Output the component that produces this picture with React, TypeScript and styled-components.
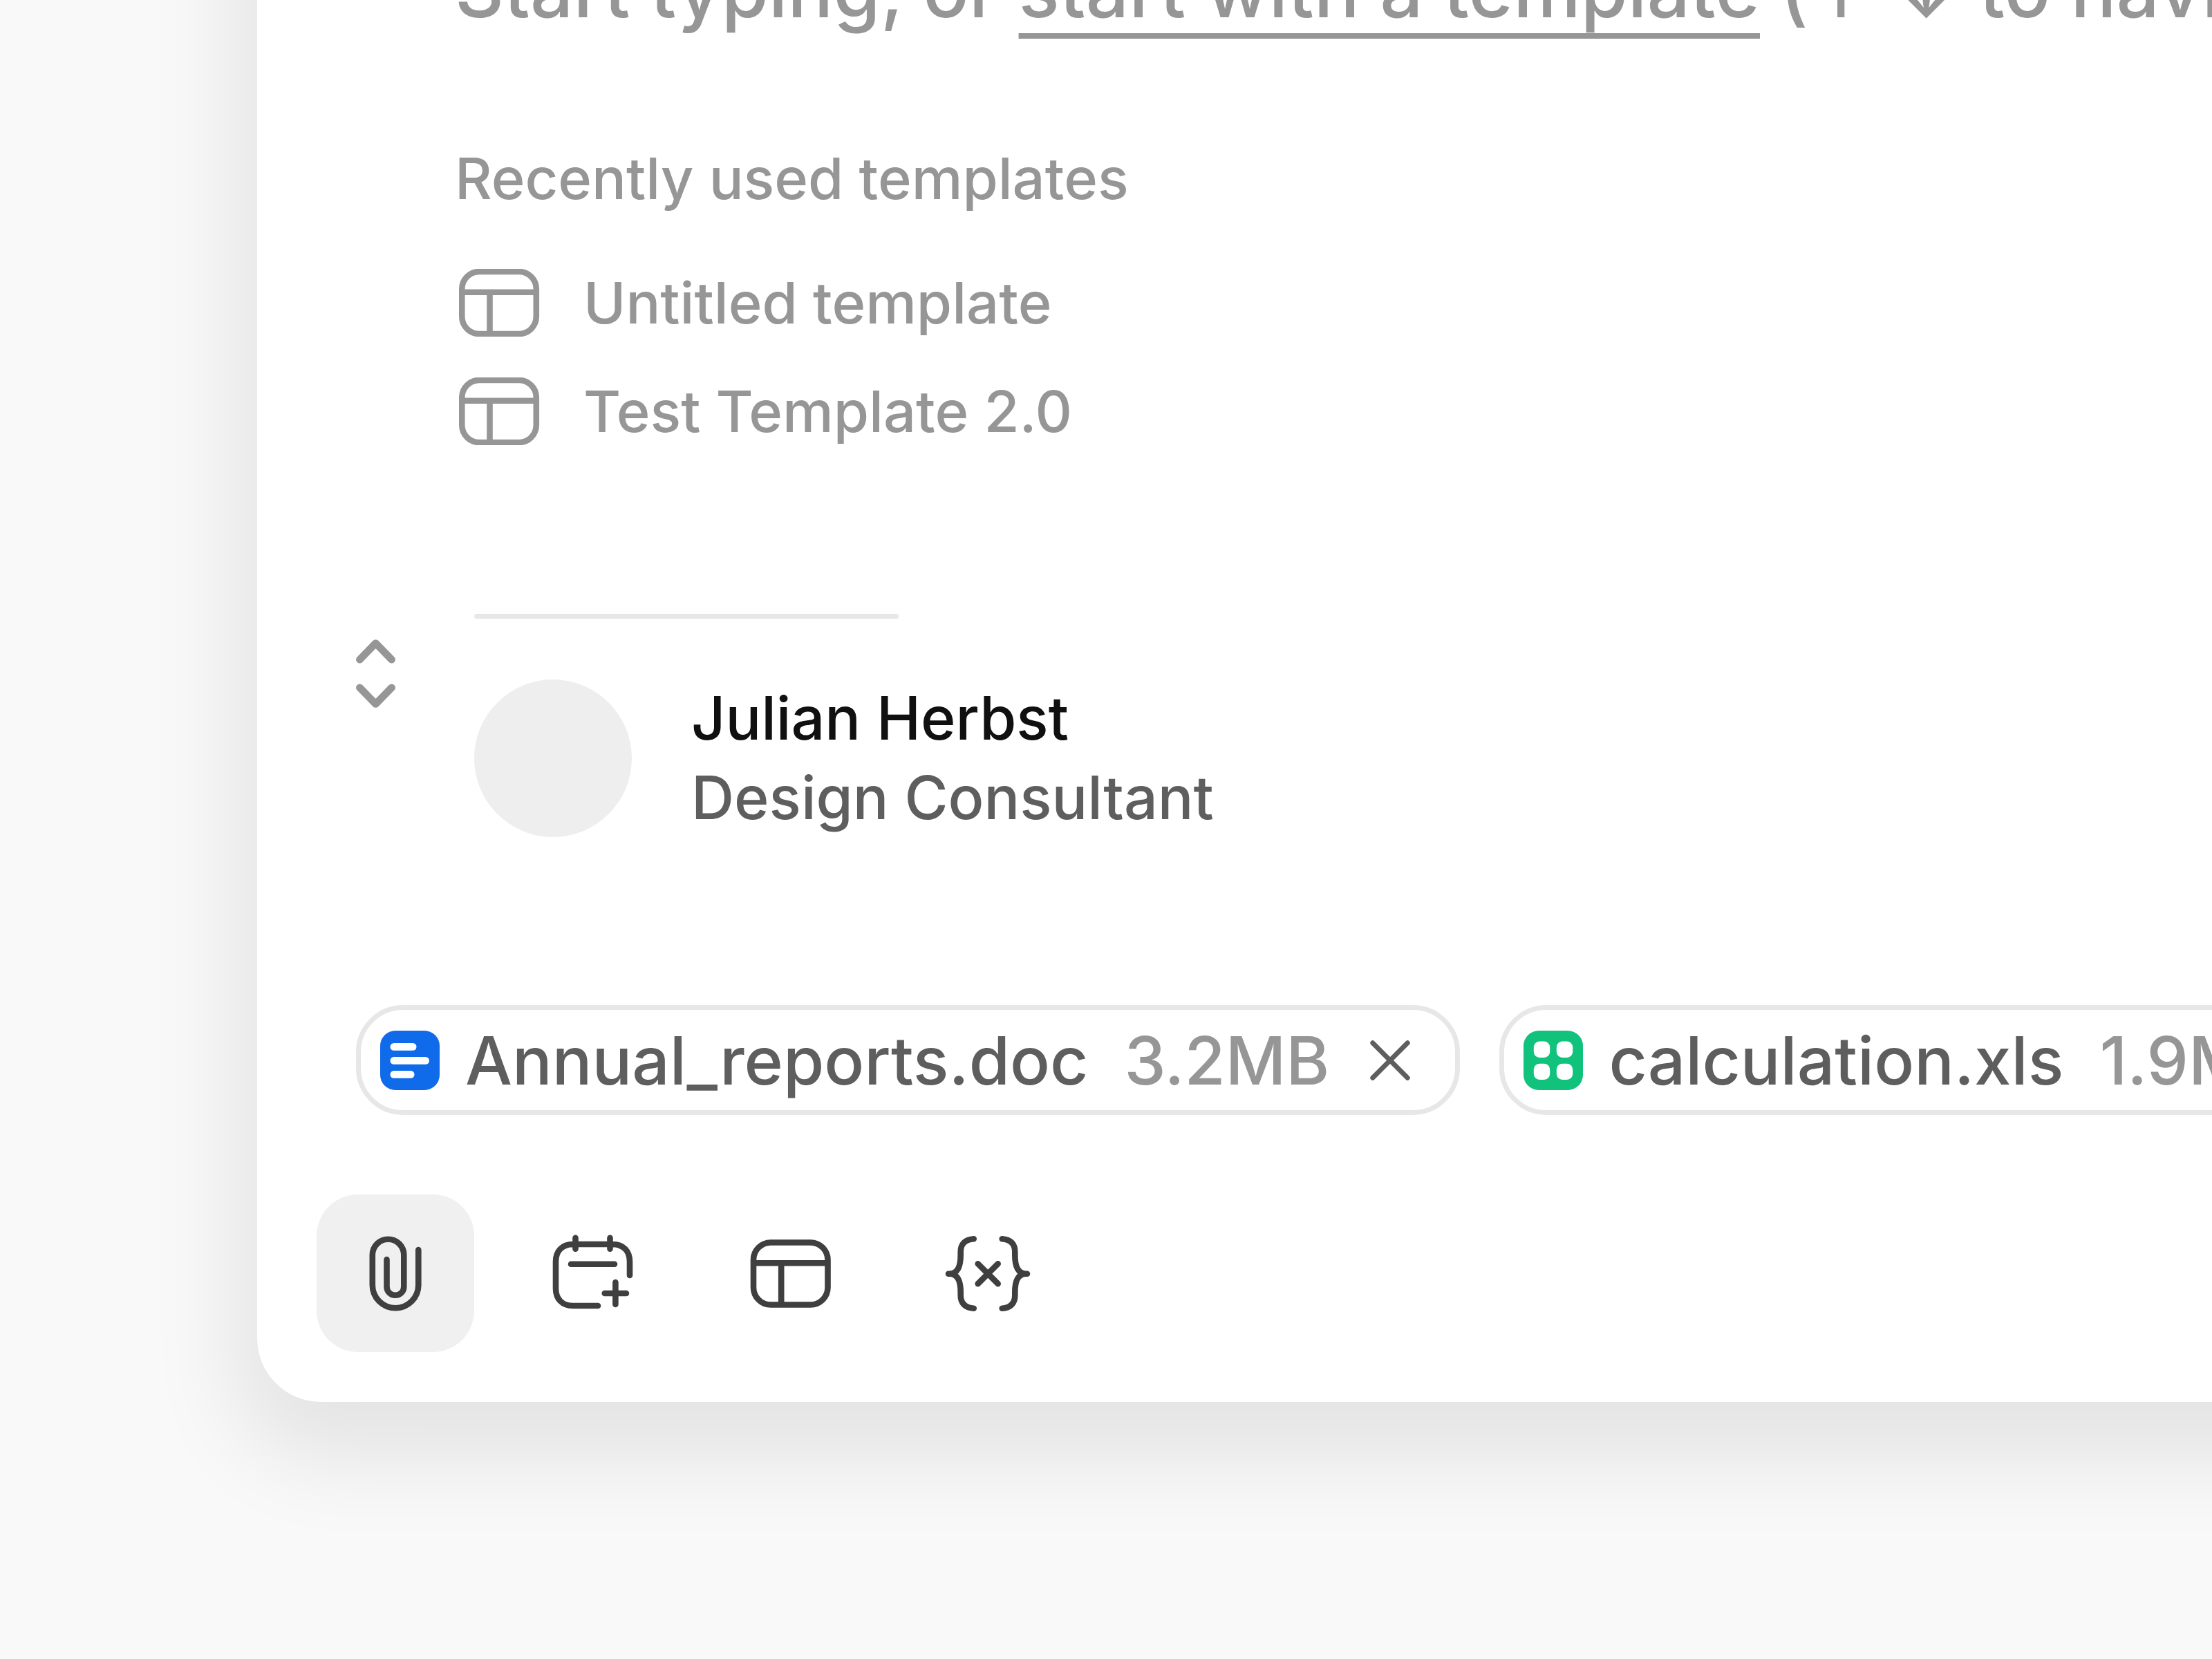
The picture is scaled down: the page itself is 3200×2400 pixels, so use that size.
import React from "react";
import styled, { createGlobalStyle } from "styled-components";

const color = {
  page: "#f9f9f9",
  card: "#ffffff",
  ink: "#101010",
  icon: "#3f3f3f",
  text: "#5e5e5e",
  muted: "#969696",
  line: "#e7e7e7",
  avatar: "#eeeeee",
  active: "#f0f0f0",
  blue: "#106bea",
  green: "#10c27c",
};

const GlobalStyle = createGlobalStyle`
  *, *::before, *::after { box-sizing: border-box; }
  body {
    margin: 0;
    background: ${color.page};
    font-family: Inter, "Liberation Sans", sans-serif;
  }
  svg { display: block; flex: none; }
`;

const Page = styled.main`
  display: flex;
  align-items: flex-end;
  height: 100vh;
  padding: 0 0 372px 372px;
  overflow: hidden;
`;

const Card = styled.section`
  flex: 1;
  min-width: 0;
  margin-right: -400px;
  padding: 144px 0 72px 86px;
  background: ${color.card};
  border-radius: 0 0 0 92px;
  box-shadow: 0 50px 128px 34px rgba(0, 0, 0, 0.085);
`;

const Editor = styled.div`
  display: flex;
  flex-direction: column;
  padding-left: 200px;
  color: ${color.muted};
  font-weight: 500;
  white-space: nowrap;
`;

const Prompt = styled.p`
  margin: 0 0 144px;
  font-size: 110px;
  line-height: 144px;
`;

const TemplateLink = styled.a`
  color: inherit;
  text-decoration: underline;
  text-decoration-thickness: 8px;
  text-decoration-skip-ink: none;
  text-underline-offset: 23px;
`;

const Heading = styled.h2`
  margin: 0 0 44px;
  font-size: 83px;
  font-weight: 500;
  line-height: 114px;
`;

const TemplateList = styled.ul`
  margin: 0 0 215px;
  padding: 0;
  list-style: none;
`;

const TemplateButton = styled.button`
  display: flex;
  align-items: center;
  gap: 56px;
  height: 157px;
  padding: 0;
  border: 0;
  background: none;
  color: inherit;
  font: inherit;
  font-size: 83px;
  cursor: pointer;
`;

const Signature = styled.div`
  display: flex;
  align-items: flex-start;
  gap: 114px;
  padding-left: 57px;
  margin-bottom: 243px;
`;

const SwitchButton = styled.button`
  padding: 36px 0 0;
  border: 0;
  background: none;
  color: ${color.muted};
  cursor: pointer;
`;

const SignatureBody = styled.div`
  display: flex;
  flex-direction: column;
  gap: 88px;
`;

const Divider = styled.hr`
  width: 614px;
  height: 7px;
  margin: 0;
  border: 0;
  border-radius: 4px;
  background: ${color.line};
`;

const Person = styled.div`
  display: flex;
  align-items: center;
  gap: 86px;
  height: 228px;
`;

const Avatar = styled.div`
  width: 228px;
  height: 228px;
  border-radius: 50%;
  background: ${color.avatar};
`;

const PersonLine = styled.p<{ $strong?: boolean }>`
  margin: 0;
  color: ${(p) => (p.$strong ? color.ink : color.text)};
  font-size: 86px;
  font-weight: 500;
  line-height: 115px;
  white-space: nowrap;
`;

const Attachments = styled.ul`
  display: flex;
  gap: 57px;
  margin: 0 0 115px;
  padding: 0 0 0 57px;
  list-style: none;
`;

const Chip = styled.li`
  display: flex;
  flex: none;
  align-items: center;
  height: 159px;
  padding: 0 37px 0 28px;
  border: 7px solid ${color.line};
  border-radius: 68px;
  font-size: 96px;
  font-weight: 500;
  white-space: nowrap;
`;

const FileName = styled.span`
  margin: 0 52px 0 37px;
  color: ${color.text};
`;

const FileSize = styled.span`
  color: ${color.muted};
`;

const RemoveButton = styled.button`
  margin-left: 31px;
  padding: 28px;
  border: 0;
  background: none;
  color: ${color.text};
  cursor: pointer;
`;

const Toolbar = styled.div`
  display: flex;
  gap: 58px;
`;

const ToolButton = styled.button<{ $active?: boolean }>`
  display: grid;
  place-items: center;
  width: 228px;
  height: 228px;
  padding: 0;
  border: 0;
  border-radius: 60px;
  background: ${(p) => (p.$active ? color.active : "transparent")};
  color: ${color.icon};
  cursor: pointer;
`;

const Stroke = styled.svg<{ $weight?: number }>`
  fill: none;
  stroke: currentColor;
  stroke-width: ${(p) => p.$weight ?? 8.6};
  stroke-linecap: round;
  stroke-linejoin: round;
`;

const LayoutShape = () => (
  <>
    <rect x="18" y="27.5" width="107.5" height="90" rx="25" />
    <path strokeLinecap="butt" d="M18 57.2H125M58.2 57V117" />
  </>
);

const TemplateIcon = () => (
  <Stroke width="130" height="98" viewBox="7.7 23.5 130 98" aria-hidden="true">
    <LayoutShape />
  </Stroke>
);

const ToolIcon = ({ children }: { children: React.ReactNode }) => (
  <Stroke width="144" height="144" viewBox="0 0 144 144" aria-hidden="true">
    {children}
  </Stroke>
);

const DocIcon = () => (
  <svg width="86" height="86" viewBox="0 0 86 86" aria-hidden="true">
    <rect width="86" height="86" rx="22" fill={color.blue} />
    <g fill="#fff">
      <rect x="14.5" y="18" width="38" height="10.7" rx="5.3" />
      <rect x="14.5" y="38" width="56.5" height="10.7" rx="5.3" />
      <rect x="14.5" y="58" width="35" height="10.7" rx="5.3" />
    </g>
  </svg>
);

const SheetIcon = () => (
  <svg width="86" height="86" viewBox="0 0 86 86" aria-hidden="true">
    <rect width="86" height="86" rx="22" fill={color.green} />
    <g fill="#fff">
      <rect x="14.8" y="15.5" width="23.4" height="23.4" rx="8.5" />
      <rect x="47.8" y="15.5" width="23.4" height="23.4" rx="8.5" />
      <rect x="14.8" y="47.7" width="23.4" height="23.4" rx="8.5" />
      <rect x="47.8" y="47.7" width="23.4" height="23.4" rx="8.5" />
    </g>
  </svg>
);

const tools = [
  {
    label: "Attach file",
    active: true,
    shape: <path d="M105.3 38V89a33.25 33.25 0 0 1-66.5 0V45.5a22.75 22.75 0 0 1 45.5 0V91.4a12.4 12.4 0 0 1-24.8 0V52" />,
  },
  {
    label: "Add event",
    shape: (
      <path d="M79 119H43C27 119 18 109 18 94V55C18 40 27 30 43 30H100C116 30 125 40 125 55V75M46.5 20.7V36.7M96.5 20.7V36.7M40 58.7H103M104.4 85V117M88.7 101H120" />
    ),
  },
  { label: "Insert template", shape: <LayoutShape /> },
  {
    label: "Insert variable",
    shape: (
      <path d="M50.7 22.3C38 23 31.7 30 31.7 41V46C31.7 62 27 72.7 16 72.7H14H16C27 72.7 31.7 83 31.7 99V104C31.7 115 38 122 50.7 122.7M91.7 22.3C104.4 23 110.3 30 110.3 41V46C110.3 62 115 72.7 126 72.7H128H126C115 72.7 110.3 83 110.3 99V104C110.3 115 104.4 122 91.7 122.7M56.7 58.3L85.7 87.1M85.7 58.3L56.7 87.1" />
    ),
  },
];

const files = [
  { name: "Annual_reports.doc", size: "3.2MB", icon: <DocIcon /> },
  { name: "calculation.xls", size: "1.9MB", icon: <SheetIcon /> },
];

const templates = ["Untitled template", "Test Template 2.0"];

export default function App() {
  return (
    <>
      <GlobalStyle />
      <Page>
        <Card>
          <Editor>
            <Prompt>
              Start typing, or <TemplateLink href="#templates">start with a template</TemplateLink> (↑ ↓ to navigate)
            </Prompt>
            <Heading id="templates">Recently used templates</Heading>
            <TemplateList>
              {templates.map((name) => (
                <li key={name}>
                  <TemplateButton type="button">
                    <TemplateIcon />
                    {name}
                  </TemplateButton>
                </li>
              ))}
            </TemplateList>
          </Editor>

          <Signature>
            <SwitchButton type="button" aria-label="Switch signature">
              <Stroke $weight={10.7} width="57" height="101" viewBox="0 0 57 101">
                <path d="M5.4 30.2L28.5 6.6L51.6 30.2M5.4 70.8L28.5 94.4L51.6 70.8" />
              </Stroke>
            </SwitchButton>
            <SignatureBody>
              <Divider />
              <Person>
                <Avatar />
                <div>
                  <PersonLine $strong>Julian Herbst</PersonLine>
                  <PersonLine>Design Consultant</PersonLine>
                </div>
              </Person>
            </SignatureBody>
          </Signature>

          <Attachments>
            {files.map((file) => (
              <Chip key={file.name}>
                {file.icon}
                <FileName>{file.name}</FileName>
                <FileSize>{file.size}</FileSize>
                <RemoveButton type="button" aria-label={`Remove ${file.name}`}>
                  <Stroke $weight={7} width="58" height="58" viewBox="0 0 58 58">
                    <path d="M3.8 3.8L54.2 54.2M54.2 3.8L3.8 54.2" />
                  </Stroke>
                </RemoveButton>
              </Chip>
            ))}
          </Attachments>

          <Toolbar role="toolbar" aria-label="Compose tools">
            {tools.map((tool) => (
              <ToolButton key={tool.label} type="button" aria-label={tool.label} $active={tool.active}>
                <ToolIcon>{tool.shape}</ToolIcon>
              </ToolButton>
            ))}
          </Toolbar>
        </Card>
      </Page>
    </>
  );
}
